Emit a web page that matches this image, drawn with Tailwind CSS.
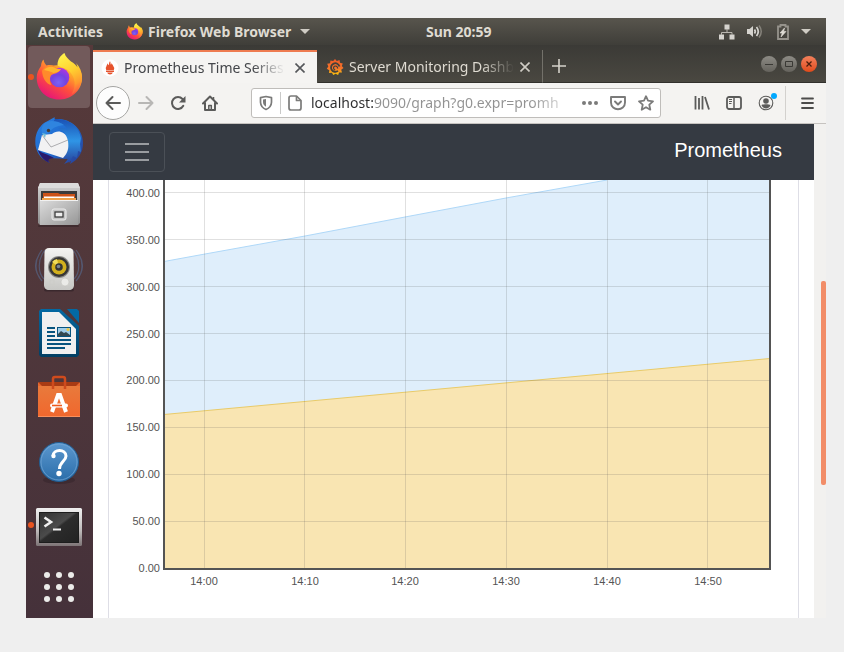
<!DOCTYPE html>
<html lang="en">
<head>
<meta charset="utf-8">
<meta name="viewport" content="width=device-width, initial-scale=1">
<title>Prometheus Time Series</title>
<script src="https://cdn.jsdelivr.net/npm/@tailwindcss/browser@4"></script>
</head>
<body class="min-h-screen bg-[#efefef] pt-[18px] pr-[18px] pb-[34px] pl-[26px] font-['Noto_Sans','Open_Sans',sans-serif]">

<svg class="absolute size-0" aria-hidden="true">
  <defs>
    <linearGradient id="ffBody" x1="0.85" y1="0.05" x2="0.2" y2="0.95">
      <stop offset="0" stop-color="#fff44f"/><stop offset=".3" stop-color="#ffa52a"/><stop offset=".6" stop-color="#ff4f3c"/><stop offset="1" stop-color="#e5127b"/>
    </linearGradient>
    <linearGradient id="ffTail" x1="0.3" y1="0" x2="0.6" y2="1">
      <stop offset="0" stop-color="#fff34c"/><stop offset=".45" stop-color="#ffd130"/><stop offset=".8" stop-color="#ff9a2e"/><stop offset="1" stop-color="#ff5a45"/>
    </linearGradient>
    <radialGradient id="ffGlobe" cx=".45" cy=".75" r=".8">
      <stop offset="0" stop-color="#7d62f5"/><stop offset=".5" stop-color="#7542e0"/><stop offset="1" stop-color="#b833e1"/>
    </radialGradient>
    <symbol id="firefox" viewBox="0 0 48 48">
      <path fill="url(#ffBody)" d="M8.500 6.500C9 9.500 10 11 11.500 12.500c2.500-.8 5-.5 7 0L25 12l14 0c4.500 3.500 7.500 6 8 12 .5 12-9 22-22 22.500C12 47 2 38 1.700 25c0-5 1.800-8.500 4.300-12 0-2.500 1-5 2.500-6.500z"/>
      <path fill="url(#ffTail)" d="M29.500 0c1 4 4 6 6.500 8.500 3 1.500 5 3.500 6.500 6-.2-2-.8-3.200-1.500-4.500 4 4 6 9 6 14.500 0 7-4 13.500-10.500 17C42 32 40 24 34 18c-4-3.500-11-4-11.500-6C22.500 6 26 2 29.500 0z"/>
      <circle cx="24.500" cy="24.500" r="9.800" fill="url(#ffGlobe)"/>
      <path fill="#ff8a2b" d="M7 18c2-4 8-7 12.500-4.500 1.500 2 3.500 2.500 6.500 2.500-1 2.500-3.500 4-7.500 5-3.500 1-3.500 4-3.500 6 0 2 .5 3.500 1.500 5C11 31 7.500 25 7 18z"/>
      <path fill="#ffb52e" d="M9 17c3-3 7-4 10.500-2.500 2 1.700 4 2 6.500 1.500-1.500 2.500-4 3.200-7.500 4-4-2-7-2.500-9.500-3z"/>
    </symbol>
    <linearGradient id="tbBlue" x1="0" y1="0" x2="1" y2="1">
      <stop offset="0" stop-color="#2a7fe0"/><stop offset=".5" stop-color="#1f6bd0"/><stop offset="1" stop-color="#2a3c92"/>
    </linearGradient>
    <linearGradient id="tbWing" x1="0" y1="0" x2="0" y2="1">
      <stop offset="0" stop-color="#1a50b4"/><stop offset=".5" stop-color="#2f95e6"/><stop offset="1" stop-color="#28439c"/>
    </linearGradient>
    <linearGradient id="metal" x1="0" y1="0" x2="1" y2="1">
      <stop offset="0" stop-color="#dcdcdc"/><stop offset="1" stop-color="#979797"/>
    </linearGradient>
    <linearGradient id="metalTop" x1="0" y1="0" x2="0" y2="1">
      <stop offset="0" stop-color="#d2d2d2"/><stop offset="1" stop-color="#8d8d8d"/>
    </linearGradient>
    <linearGradient id="white3d" x1="0" y1="0" x2="0" y2="1">
      <stop offset="0" stop-color="#f4f4f2"/><stop offset="1" stop-color="#c7c7c4"/>
    </linearGradient>
    <linearGradient id="bagFill" x1="0" y1="0" x2="0" y2="1">
      <stop offset="0" stop-color="#e87a3c"/><stop offset="1" stop-color="#f1672d"/>
    </linearGradient>
    <linearGradient id="helpFill" x1="0" y1="0" x2="0" y2="1">
      <stop offset="0" stop-color="#5c98cf"/><stop offset="1" stop-color="#2a6da9"/>
    </linearGradient>
    <linearGradient id="docEdge" x1="0" y1="0" x2="0" y2="1">
      <stop offset="0" stop-color="#0369a3"/><stop offset="1" stop-color="#023f63"/>
    </linearGradient>
    <linearGradient id="termEdge" x1="0" y1="0" x2="0" y2="1">
      <stop offset="0" stop-color="#f0f0f0"/><stop offset=".6" stop-color="#bdb9b9"/><stop offset="1" stop-color="#7d7476"/>
    </linearGradient>
    <linearGradient id="termFill" x1="0" y1="0" x2="1" y2="1">
      <stop offset="0" stop-color="#303030"/><stop offset=".45" stop-color="#4b4b4b"/><stop offset=".5" stop-color="#2c2c2c"/><stop offset="1" stop-color="#222"/>
    </linearGradient>
    <linearGradient id="grafanaFill" x1="0" y1="0" x2="0" y2="1">
      <stop offset="0" stop-color="#f05a28"/><stop offset=".6" stop-color="#f5762a"/><stop offset="1" stop-color="#fbca0a"/>
    </linearGradient>
  </defs>
</svg>

<div class="flex min-h-[600px] flex-col">

  <!-- System bar -->
  <header class="flex h-[27px] items-center bg-linear-to-b from-[#58554d] to-[#3f3e39] text-sm font-bold text-[#dfdbd2]">
    <div class="flex w-1/2 items-center whitespace-nowrap pl-3">
      <button type="button">Activities</button>
      <button type="button" class="ml-[23px] flex items-center gap-[5px]">
        <svg class="size-[17px]" aria-hidden="true"><use href="#firefox"/></svg>
        <span>Firefox Web Browser</span>
        <svg class="ml-1 h-[5px] w-[10px]" viewBox="0 0 10 5" aria-hidden="true"><path fill="#cfccc4" d="M0 0h10L5 5z"/></svg>
      </button>
    </div>
    <time class="whitespace-nowrap">Sun 20:59</time>
    <div class="ml-auto flex items-center pr-[15px]">
      <button type="button" aria-label="Network">
        <svg class="size-4" viewBox="0 0 16 16" fill="#d5d3ce"><path d="M5.500 0.500h5v5h-5zM0 10.500h5v5H0zM10.500 10.500h5v5h-5z"/><path fill="none" stroke="#b9b6af" d="M8 5v3.500M2.500 11V8.500h10.500V11"/></svg>
      </button>
      <button type="button" aria-label="Volume" class="ml-3">
        <svg class="size-4" viewBox="0 0 16 16"><path fill="#d5d3ce" d="M0 5h2.500L6 2v11l-3.500-3H0z"/><path fill="none" stroke="#d5d3ce" stroke-width="1.700" d="M7.500 5.500q1.500 2 0 4M9.500 3q3.500 4.500 0 9"/><path fill="none" stroke="#85827a" stroke-width="1.500" d="M12 1.500q4.500 6 0 12"/></svg>
      </button>
      <button type="button" aria-label="Battery" class="ml-[14px]">
        <svg class="h-4 w-3" viewBox="0 0 12 16"><path fill="none" stroke="#96938c" stroke-width="1.800" d="M1 2.500h2.500V1h5v1.500H11v12.500H1z"/><path fill="#dfdcd5" stroke="#dfdcd5" stroke-width=".6" d="M7.500 4 3 9h2.200L4 13l5-5.500H6.700z"/></svg>
      </button>
      <button type="button" aria-label="System menu" class="ml-3">
        <svg class="h-[5px] w-[10px]" viewBox="0 0 10 5"><path fill="#cfccc4" d="M0 0h10L5 5z"/></svg>
      </button>
    </div>
  </header>

  <div class="flex flex-1">

    <!-- Dock -->
    <nav aria-label="Dock" class="flex w-[67px] shrink-0 flex-col bg-linear-to-b from-[#56393a] via-[#4f373b] to-[#45313a] pr-px">
      <button type="button" aria-label="Firefox" class="relative flex h-16 items-center justify-center">
        <span class="flex size-[62px] items-center justify-center rounded-sm bg-[#725a5b]">
          <svg class="size-12"><use href="#firefox"/></svg>
        </span>
        <span class="absolute left-[2px] size-[6px] rounded-full bg-[#e95420]"></span>
      </button>
      <button type="button" aria-label="Thunderbird" class="flex h-16 items-center justify-center">
        <svg class="size-12" viewBox="0 0 48 48">
          <path fill="url(#tbBlue)" d="M9 6c4-2 7-4 11-6-1 1-.5 1.500 0 2C36 1 48 12 48 26c0 9-4 16-13 21l1-3-7 3 4-5-19-1c-2 2-1 3 1 5C5 42 0 34 .3 24 .5 16 4 10 9 6z"/>
          <path fill="#2a1a6c" d="M3 33c5 4 10 4 16 8l-5 1c-1 2-.5 3 1 4C9 44 5 39 3 33z"/>
          <path fill="url(#tbWing)" d="M20 2c14-1 24 8 26 19l-1 6 1 8-3-1-1 7-4-2-4 7-2-5-4 1 4-7V24c0-7-3-10-9-13 6-1 8 1 10 3-2-6-8-9-15-9z"/>
          <path fill="#2f84df" d="M9 7c5-5 14-3 20 1-8 1-12 3-15 8l-6 2c-2-4-2-7 1-11z"/>
          <path fill="#f2f2f3" d="m7 18 10-1c2-2 6-3 9-2 4 1 6 4 7 9 1 7 0 12-5 17L3 33z"/>
          <path fill="none" stroke="#9b9b9e" stroke-width=".8" d="m7 18 9 12 17-7"/>
          <circle cx="13.500" cy="13.500" r="1.700" fill="#4a3a33"/><path fill="#72bdd6" d="m7 16 4 1-1 4z"/>
        </svg>
      </button>
      <button type="button" aria-label="Files" class="flex h-16 items-center justify-center">
        <svg class="size-12" viewBox="0 0 48 48">
          <rect x="3" y="44" width="41" height="2" rx="1" fill="#2e2024" opacity=".5"/>
          <path fill="url(#metalTop)" d="M5 2h38l2 5v35l-2 2H5l-2-2V7z"/><path fill="#dcdcdc" d="M5 2h38l2 5H3z"/>
          <path fill="#3b3b3b" d="M6 10h36v10H6z"/><path fill="#cc5218" d="M8 12h15l2 1h15v7H8z"/><path fill="#fff" d="M9 15.500h30v2H9z"/><path fill="#f0a14a" d="M7 17h34v3H7z"/>
          <path fill="url(#metal)" d="M5 19h38v25H5z"/><path stroke="#f1f1f1" d="M5 19.500h38"/>
          <rect x="17" y="28" width="14" height="11" rx="2" fill="#c4c4c4" stroke="#ececec"/><rect x="20" y="31" width="8" height="5" fill="#ededed" stroke="#3c3c3c" stroke-width="1.300"/>
        </svg>
      </button>
      <button type="button" aria-label="Rhythmbox" class="flex h-16 items-center justify-center">
        <svg class="size-12" viewBox="0 0 48 48">
          <g fill="none" stroke="#566c93" stroke-width="1.200" opacity=".6"><path d="M7 5C-1 15-1 27 7 36M10 5C2 15 3 28 9 34M5 8c-6 9-6 17 0 25M41 5c8 10 8 22 0 31M38 5c8 10 7 23 1 29M43 8c6 9 6 17 0 25"/></g>
          <rect x="9" y="43" width="30" height="3.500" rx="2" fill="#241a20" opacity=".5"/>
          <path fill="url(#white3d)" d="M14 3h20c3 0 4 2 4.500 4l.5 33c0 3-2 5-5 5H14c-3 0-5-2-5-5l.5-33C10 5 11 3 14 3z"/>
          <circle cx="24" cy="22" r="11" fill="#8b8b88"/><circle cx="24" cy="22" r="10" fill="#363636"/><circle cx="24" cy="22" r="7.500" fill="#d2b01e"/><path fill="#f1dc59" d="M24 22 17 17a8 8 0 0 1 5-3z"/><circle cx="24" cy="22" r="3.800" fill="#353535"/><circle cx="23.500" cy="21.500" r="1.800" fill="#79858e"/>
          <circle cx="30" cy="37" r="4" fill="#ebebe8" stroke="#c4c4c0" stroke-width=".6"/><rect x="15" y="35" width="4" height="5" fill="none" stroke="#cbcbc7" stroke-width=".7"/>
        </svg>
      </button>
      <button type="button" aria-label="LibreOffice Writer" class="flex h-16 items-center justify-center">
        <svg class="size-12" viewBox="0 0 48 48">
          <path fill="url(#docEdge)" d="M6 0h19l19 17v29l-2 2H6l-2-2V2z"/><path fill="#f0f0f0" d="M7 3h17l17 17v25H7z"/><path fill="#0369a3" d="M32 0h10l2 2v12z"/>
          <path stroke="#07547f" stroke-width="2" d="M12 19h8M12 23h8M12 27h8M12 31h24M12 35h24M12 39h18"/>
          <path fill="#07547f" d="M22 18h14v10H22z"/><path fill="#9fcde9" d="M23 19h12v8H23z"/><circle cx="33" cy="20.500" r="1.600" fill="#edc844"/><path fill="#334850" d="m23 27v-2l3-3 3 2 2-1 4 3v1z"/>
        </svg>
      </button>
      <button type="button" aria-label="Ubuntu Software" class="flex h-16 items-center justify-center">
        <svg class="size-12" viewBox="0 0 48 48">
          <path fill="#a83b14" d="M4 9h40v5H4z"/><path fill="#e4662e" d="m3 9 4 4v1H3zM45 9l-4 4v1h4z"/>
          <path fill="url(#bagFill)" d="M3 13h42v31H3z"/><path fill="#fa8f5c" d="M3 43h42v1H3z"/>
          <path fill="none" stroke="#cf4b1d" stroke-width="2.500" d="M18 16V6q0-2 2-2h8q2 0 2 2v10"/>
          <path fill="none" stroke="#fff" stroke-width="4" d="m17 39 6-17h2l6 17"/><rect x="15" y="30.500" width="18" height="4" rx="2" fill="#fff"/><path stroke="#ef5a1d" stroke-width="1.600" d="M17 32.500h10"/>
        </svg>
      </button>
      <button type="button" aria-label="Help" class="flex h-16 items-center justify-center">
        <svg class="size-12" viewBox="0 0 48 48">
          <ellipse cx="24" cy="43" rx="16" ry="4" fill="#2c1e25" opacity=".4"/>
          <circle cx="24" cy="25" r="19.500" fill="url(#helpFill)" stroke="#215d92"/><circle cx="24" cy="25" r="18" fill="none" stroke="#75a8d6" stroke-width=".7"/>
          <path fill="none" stroke="#fff" stroke-width="3" d="M18 19c0-7 13-7.500 13 0 0 5-6.500 6-6.500 13"/><circle cx="18.500" cy="19" r="2.200" fill="#fff"/><circle cx="24" cy="36.500" r="2.700" fill="#fff"/>
        </svg>
      </button>
      <button type="button" aria-label="Terminal" class="relative flex h-16 items-center justify-center">
        <svg class="size-12" viewBox="0 0 48 48">
          <rect x="1" y="7" width="46" height="38" rx="1.500" fill="url(#termEdge)"/><rect x="4.500" y="11.500" width="39" height="30" fill="url(#termFill)" stroke="#1d1d1d"/>
          <path fill="none" stroke="#f1f1f1" stroke-width="2.600" d="m9.500 16.500 6.500 4.500-6.500 4.500"/><path fill="#f1f1f1" d="M18 27.500h8v2h-8z"/>
        </svg>
        <span class="absolute left-[2px] size-[6px] rounded-full bg-[#e95420]"></span>
      </button>
      <button type="button" aria-label="Show applications" class="flex h-[60px] items-center justify-center">
        <svg class="size-[30px]" viewBox="0 0 30 30" fill="#ececea"><circle cx="3" cy="3" r="3"/><circle cx="15" cy="3" r="3"/><circle cx="27" cy="3" r="3"/><circle cx="3" cy="15" r="3"/><circle cx="15" cy="15" r="3"/><circle cx="27" cy="15" r="3"/><circle cx="3" cy="27" r="3"/><circle cx="15" cy="27" r="3"/><circle cx="27" cy="27" r="3"/></svg>
      </button>
    </nav>

    <!-- Browser window -->
    <div class="flex min-w-0 flex-1 flex-col bg-white">

      <div class="flex h-[38px] items-end bg-linear-to-b from-[#3b3a36] to-[#4a4841] pt-[5px]">
        <div class="flex h-full w-56 items-center border-t-2 border-[#ee7b50] bg-[#f5f4f2] pr-3 pl-2 text-sm text-[#44464a]">
          <svg class="size-[18px] shrink-0" viewBox="0 0 18 18" aria-hidden="true"><circle cx="9" cy="9" r="8.500" fill="#fff"/><path fill="#e6522c" d="M9 2.200c1 1.500 0 2.500 1 3.500.5-.5.500-1 .4-1.600C12 6 12.500 8 13.300 9l-.5 2H5.200l-.5-2C5.500 8 5.500 6 7 4.300c0 1 0 1.500.7 2C8.300 4.800 7.800 3.500 9 2.200zM5 11.500h8v1.500H5zM6.200 13.500h5.600c-.5 2.600-5.100 2.600-5.600 0z"/></svg>
          <button type="button" class="ml-[5px] min-w-0 flex-1 overflow-hidden whitespace-nowrap text-left mask-r-from-80% mask-r-to-100%">Prometheus Time Series</button>
          <button type="button" aria-label="Close tab" class="ml-[10px]"><svg class="size-[10px]" viewBox="0 0 10 10" fill="none" stroke="#55575a" stroke-width="1.600"><path d="m.5.500 9 9m0-9-9 9"/></svg></button>
        </div>
        <div class="ml-px flex h-full w-[225px] items-center border-r border-b border-r-[#73716a] border-b-[#31302c] pt-[2px] pr-3 pl-2 text-sm text-[#dfdbd2]">
          <svg class="size-[18px] shrink-0" viewBox="0 0 18 18" aria-hidden="true"><path fill="url(#grafanaFill)" d="m9 1 1.800 2 2.700-1 .5 2.800 2.800.700-1 2.600L17.500 10l-2.300 1.700.8 2.700-2.900.1-1 2.600-2.500-1.400L7.300 17l-1.400-2.300-2.900.3.300-2.800L.8 10.800 2.300 8.500 1.200 5.800l2.900-.6.300-2.800L7.200 3z"/><path fill="none" stroke="#42413b" stroke-width="1.800" d="M13.500 8.500a4.300 4.300 0 1 0-1.500 4.400"/><path fill="none" stroke="#42413b" stroke-width="1.200" d="M11.500 10.500a2 2 0 1 0-2.200 1.500"/></svg>
          <button type="button" class="ml-[5px] min-w-0 flex-1 overflow-hidden whitespace-nowrap text-left mask-r-from-80% mask-r-to-100%">Server Monitoring Dashb</button>
          <button type="button" aria-label="Close tab" class="ml-[6px]"><svg class="size-[10px]" viewBox="0 0 10 10" fill="none" stroke="#cfccc4" stroke-width="1.600"><path d="m.5.500 9 9m0-9-9 9"/></svg></button>
        </div>
        <div class="flex h-full flex-1 items-center border-b border-[#31302c] pr-[9px] pl-[9px]">
          <button type="button" aria-label="New tab"><svg class="size-[14px]" viewBox="0 0 14 14" stroke="#d5d2ca" stroke-width="1.600"><path d="M7 0v14M0 7h14"/></svg></button>
          <div class="ml-auto flex gap-1 pb-1">
            <button type="button" aria-label="Minimize" class="flex size-4 items-center justify-center rounded-full bg-linear-to-b from-[#8d8b85] to-[#65635d]"><svg class="size-4" viewBox="0 0 16 16" stroke="#3a3935"><path d="M4 8.500h8"/></svg></button>
            <button type="button" aria-label="Maximize" class="flex size-4 items-center justify-center rounded-full bg-linear-to-b from-[#8d8b85] to-[#65635d]"><svg class="size-4" viewBox="0 0 16 16" fill="none" stroke="#3a3935"><path d="M4.500 5.500h7v5h-7z"/></svg></button>
            <button type="button" aria-label="Close" class="flex size-4 items-center justify-center rounded-full bg-linear-to-b from-[#f3805a] to-[#e04a18]"><svg class="size-4" viewBox="0 0 16 16" stroke="#4a1e0d" stroke-width="1.300"><path d="m5.500 5.500 5 5m0-5-5 5"/></svg></button>
          </div>
        </div>
      </div>

      <div class="flex h-[41px] items-center border-b border-[#c6c3c0] bg-[#f4f3f1] pr-[11px] pl-[3px]">
        <button type="button" aria-label="Back" class="flex size-[34px] items-center justify-center rounded-full border border-[#a5a5a3] bg-[#fdfdfd]"><svg class="size-4" viewBox="0 0 16 16" fill="none" stroke="#5b5b5a" stroke-width="2" stroke-linecap="round" stroke-linejoin="round"><path d="M15 8H1.500M7.500 2l-6 6 6 6"/></svg></button>
        <button type="button" aria-label="Forward" class="ml-2"><svg class="size-4" viewBox="0 0 16 16" fill="none" stroke="#b8b7b5" stroke-width="2" stroke-linecap="round" stroke-linejoin="round"><path d="M1 8h13.500m-6-6 6 6-6 6"/></svg></button>
        <button type="button" aria-label="Reload" class="ml-4"><svg class="size-4" viewBox="0 0 16 16"><path fill="none" stroke="#5b5b5a" stroke-width="2" stroke-linecap="round" d="M13.300 10.800A6 6 0 1 1 12.500 4"/><path fill="#5b5b5a" d="M15.500 1v6.500H9z"/></svg></button>
        <button type="button" aria-label="Home" class="ml-4"><svg class="size-4" viewBox="0 0 16 16" fill="none" stroke="#5b5b5a" stroke-width="2" stroke-linecap="round" stroke-linejoin="round"><path d="m1 8.500 7-7 7 7M3 8v7h10V8"/><path stroke-width="1.500" stroke-linecap="butt" d="M6.800 15v-4.500h2.500V15M11.500 2v3"/></svg></button>

        <div class="ml-[33px] flex h-[30px] min-w-0 flex-1 items-center rounded-[3px] border border-[#bfbdba] bg-white pr-[6px] pl-[6px]">
          <button type="button" aria-label="Tracking protection"><svg class="size-4" viewBox="0 0 16 16" fill="none" stroke="#7b7b7a" stroke-width="1.700" stroke-linejoin="round"><path d="m8 1.500 5.500 1.200v4.500C13.300 11 11.500 13 8 14.500 4.500 13 2.700 11 2.500 7.200V2.700z"/><path fill="#7b7b7a" stroke="none" d="M8 4v7.800C6 10.500 5 9 5 7V4.600z"/></svg></button>
          <span class="ml-[6px] h-[22px] w-px bg-[#c9c9c8]"></span>
          <svg class="ml-[6px] size-4 shrink-0" viewBox="0 0 16 16" fill="none" stroke="#7b7b7a" stroke-width="1.700" stroke-linejoin="round" aria-hidden="true"><path d="M4 1h5.500L14 5.500V13q0 2-2 2H4q-2 0-2-2V3q0-2 2-2z"/><path d="M9.500 1v4.500H14"/></svg>
          <input type="text" aria-label="Address" value="localhost:9090/graph?g0.expr=promh" class="ml-2 min-w-0 flex-1 bg-[linear-gradient(to_right,#2d2d2e_63px,#929292_63px,#929292_220px,#92929200_268px)] bg-clip-text text-sm text-transparent outline-none">
          <button type="button" aria-label="Page actions" class="ml-2"><svg class="size-4" viewBox="0 0 16 16" fill="#7b7b7a"><circle cx="2" cy="8" r="2"/><circle cx="8" cy="8" r="2"/><circle cx="14" cy="8" r="2"/></svg></button>
          <button type="button" aria-label="Save to Pocket" class="ml-3"><svg class="size-4" viewBox="0 0 16 16" fill="none" stroke="#7b7b7a" stroke-width="1.900" stroke-linecap="round" stroke-linejoin="round"><path d="M1 2h14v5.500c0 9-14 9-14 0z"/><path d="m5 6.500 3 3 3-3"/></svg></button>
          <button type="button" aria-label="Bookmark this page" class="ml-3"><svg class="size-4" viewBox="0 0 16 16" fill="none" stroke="#7b7b7a" stroke-width="1.800" stroke-linejoin="round"><path d="m8 1.200 2 4.500 5 .6-3.700 3.400 1 5L8 12.200l-4.300 2.500 1-5L1 6.300l5-.6z"/></svg></button>
        </div>

        <button type="button" aria-label="Library" class="ml-[33px]"><svg class="size-4" viewBox="0 0 16 16" fill="none" stroke="#5b5b5a" stroke-width="1.800"><path d="M1.500 1v13.500M5 3v11.500M8.500 1v13.500M11 2l4 12.500"/></svg></button>
        <button type="button" aria-label="Sidebars" class="ml-4"><svg class="size-4" viewBox="0 0 16 16" fill="none" stroke="#5b5b5a" stroke-width="1.800"><rect x="1" y="2" width="14" height="12" rx="2"/><path stroke-width="1.500" d="M8 2v12"/><path stroke-width="1" d="M3 4.500h3M3 6.500h3M3 8.500h2.500"/></svg></button>
        <button type="button" aria-label="Account" class="relative ml-4"><svg class="size-4" viewBox="0 0 16 16"><circle cx="8" cy="8" r="6.800" fill="none" stroke="#5b5b5a" stroke-width="1.100"/><circle cx="8" cy="6" r="2.800" fill="#5b5b5a"/><path fill="#5b5b5a" d="M3.500 10c1.500-1 7.500-1 9 0-1 4.500-8 4.500-9 0z"/></svg><span class="absolute -top-[2px] -right-[3px] size-[6px] rounded-full bg-[#00a8ff]"></span></button>
        <span class="ml-[11px] h-[34px] w-px bg-[#d3d1ce]"></span>
        <button type="button" aria-label="Open menu" class="ml-[13px]"><svg class="size-4" viewBox="0 0 16 16" stroke="#4c4c4b" stroke-width="1.800" stroke-linecap="round"><path d="M3 3.500h11M3 8h11M3 13h11"/></svg></button>
      </div>

      <div class="flex flex-1">
        <main class="flex min-w-0 flex-1 flex-col">
          <nav aria-label="Main" class="flex h-14 items-center justify-between bg-[#353a42] pr-8 pl-4 font-['Liberation_Sans',Arial,sans-serif]">
            <button type="button" aria-label="Toggle navigation" class="flex h-10 w-14 items-center justify-center rounded border border-[#4b5057]">
              <svg class="size-6" viewBox="0 0 24 24" stroke="#999ca0" stroke-width="2"><path d="M0 4h24M0 12h24M0 20h24"/></svg>
            </button>
            <a href="#" class="pb-1 text-xl text-white">Prometheus</a>
          </nav>

          <section aria-label="Graph" class="mx-[15px] flex-1 border-x border-[#dedee6]">
            <svg class="block h-auto w-full" viewBox="0 0 689 438" role="img" aria-label="Time series graph" font-family="'Liberation Sans', Arial, sans-serif" font-size="11" fill="#545454">
              <path fill="#dfeefb" d="M55 81.500 96 74 196 56 296 37 397 18 498 0h163v389H55z"/>
              <path fill="#f9e5b2" d="M55 234.500 661 178.500V389H55z"/>
              <path fill="none" stroke="#afd8f8" d="M55 81.500 96 74 196 56 296 37 397 18 498 0"/>
              <path fill="none" stroke="#e9cb69" d="M55 234.500 661 178.500"/>
              <path fill="none" stroke="#545454" stroke-opacity=".18" d="M55 12.500h606M55 59.500h606M55 106.500h606M55 153.500h606M55 200.500h606M55 247.500h606M55 294.500h606M55 341.500h606M95.500 0v389M195.500 0v389M296.500 0v389M397.500 0v389M498.500 0v389M598.500 0v389"/>
              <path fill="none" stroke="#545454" stroke-width="2" d="M55 0v389h606V0"/>
              <g text-anchor="end">
                <text x="51" y="17">400.00</text><text x="51" y="64">350.00</text><text x="51" y="111">300.00</text><text x="51" y="158">250.00</text><text x="51" y="204">200.00</text><text x="51" y="251">150.00</text><text x="51" y="298">100.00</text><text x="51" y="345">50.00</text><text x="51" y="392">0.00</text>
              </g>
              <g text-anchor="middle">
                <text x="95" y="405">14:00</text><text x="196" y="405">14:10</text><text x="296" y="405">14:20</text><text x="397" y="405">14:30</text><text x="498" y="405">14:40</text><text x="599" y="405">14:50</text>
              </g>
            </svg>
          </section>
        </main>
        <div class="flex w-3 flex-col items-end bg-[#f2f1ef] pt-[157px]" aria-hidden="true">
          <div class="h-[204px] w-[5px] rounded-xs bg-[#f28d68]"></div>
        </div>
      </div>
    </div>
  </div>
</div>
</body>
</html>
